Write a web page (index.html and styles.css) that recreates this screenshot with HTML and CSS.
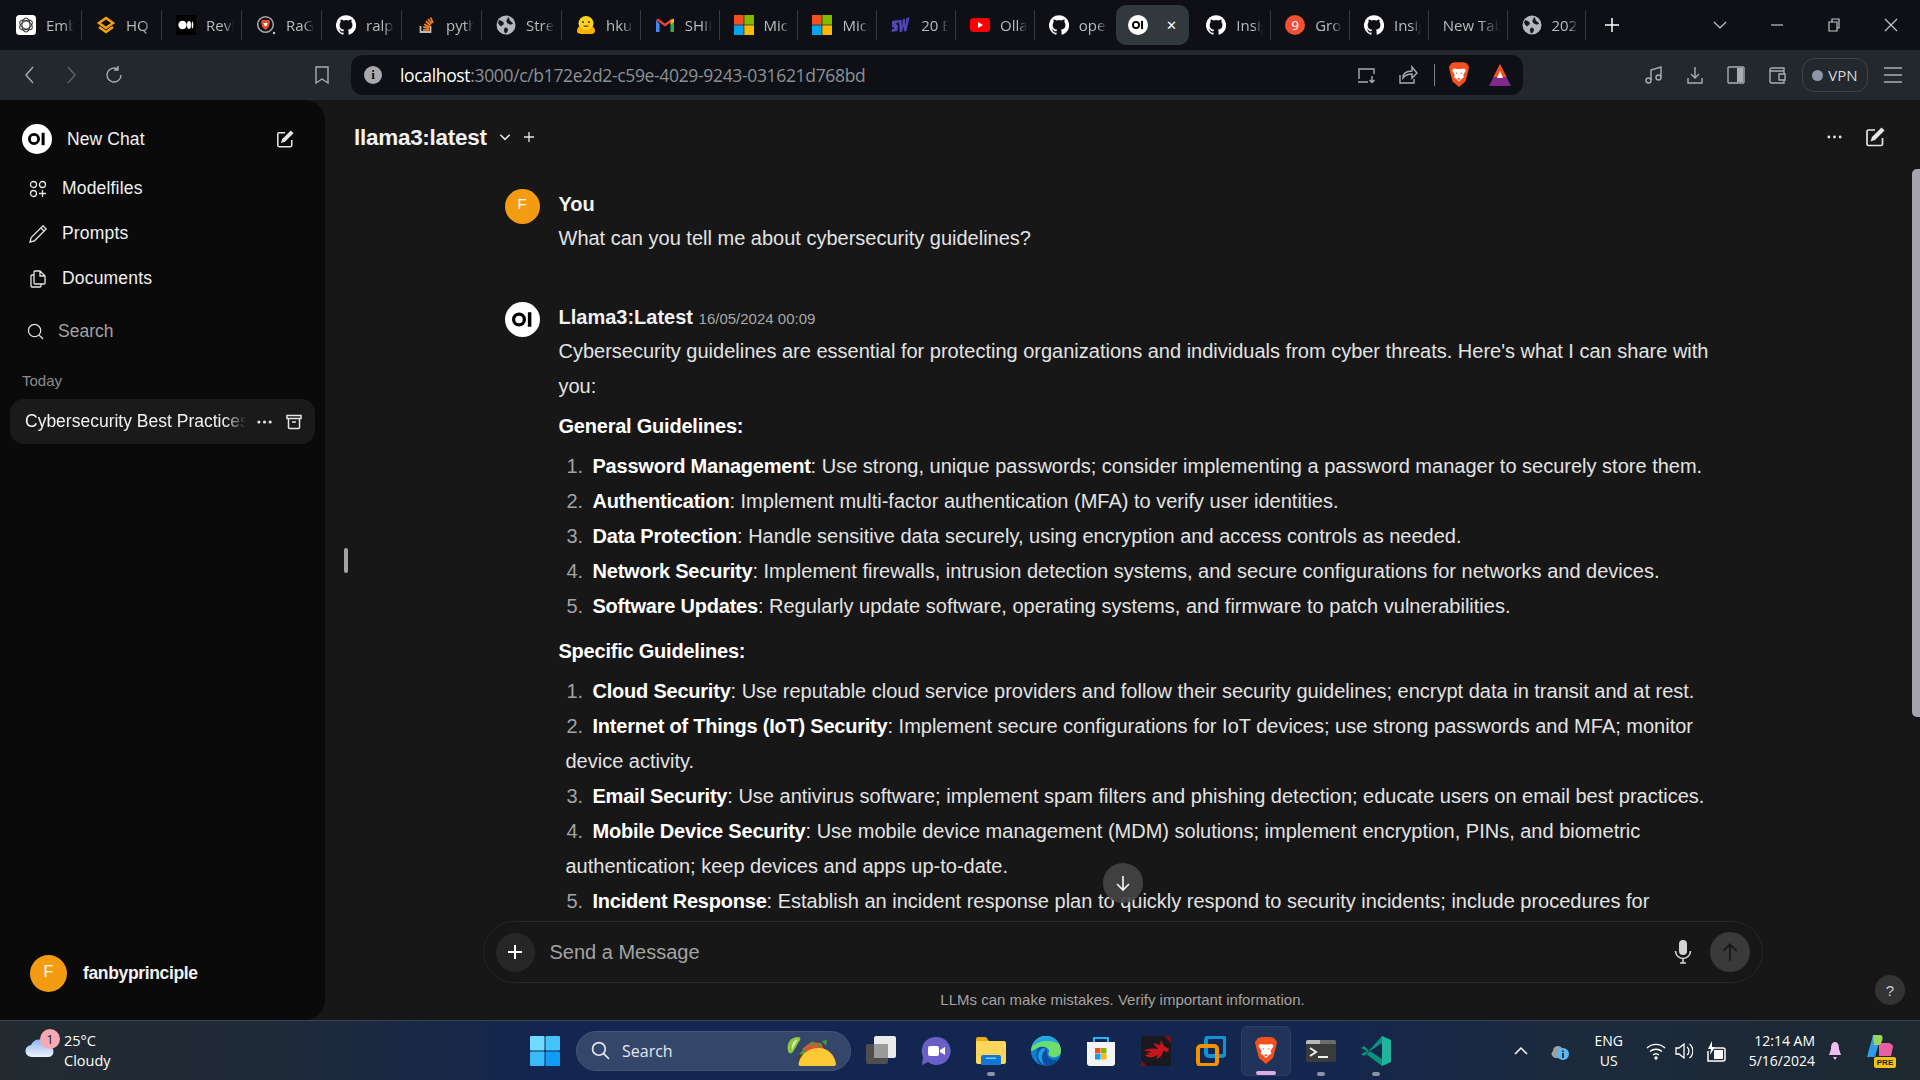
FILE: index.html
```html
<!DOCTYPE html>
<html lang="en">
<head>
<meta charset="utf-8">
<title>Open WebUI</title>
<link rel="stylesheet" href="styles.css">
</head>
<body>
<svg class="defs" aria-hidden="true">
  <symbol id="oi" viewBox="0 0 30 30"><circle cx="15" cy="15" r="15" fill="#fff"/><circle cx="12" cy="15" r="4.6" fill="none" stroke="#000" stroke-width="2.8"/><rect x="19.6" y="8.8" width="3" height="12.4" fill="#000"/></symbol>
  <symbol id="gh" viewBox="0 0 24 24"><path fill="#fff" d="M12 .3a12 12 0 0 0-3.8 23.4c.6.1.8-.3.8-.6v-2c-3.3.7-4-1.6-4-1.6-.6-1.4-1.4-1.8-1.4-1.8-1-.7.1-.7.1-.7 1.2.1 1.9 1.2 1.9 1.2 1 1.8 2.8 1.3 3.5 1 .1-.8.4-1.3.8-1.6-2.7-.3-5.5-1.3-5.5-6 0-1.2.5-2.3 1.3-3.1-.2-.4-.6-1.6 0-3.2 0 0 1-.3 3.4 1.2a11.5 11.5 0 0 1 6 0c2.3-1.5 3.3-1.2 3.3-1.2.6 1.6.2 2.8 0 3.2.9.8 1.3 1.9 1.3 3.2 0 4.6-2.8 5.6-5.5 5.9.5.4.9 1 .9 2.2v3.3c0 .3.1.7.8.6A12 12 0 0 0 12 .3"/></symbol>
  <symbol id="globe" viewBox="0 0 20 20"><circle cx="10" cy="10" r="9.500" fill="#b4b7bb"/><path fill="#17191e" d="M3 5c2 .5 3.500 1 4.500 2.500S7 10 5.500 11 3 9 2 8zM12 2c2 1 1 3.500 3 4.500s1.500 2 2 2-1.500 1.500-3 1-3-1-3.500-3S12 4 12 2zM9 12.500c2 0 3 1 3 2.500s-1.500 3-3 3.500c-.5-2-1.500-3-1-4z"/></symbol>
  <symbol id="chatgpt" viewBox="0 0 20 20"><rect width="20" height="20" rx="3.500" fill="#fff"/><g fill="none" stroke="#444" stroke-width="1.100"><ellipse cx="10" cy="10" rx="4" ry="7"/><ellipse cx="10" cy="10" rx="4" ry="7" transform="rotate(60 10 10)"/><ellipse cx="10" cy="10" rx="4" ry="7" transform="rotate(120 10 10)"/></g></symbol>
  <symbol id="hq" viewBox="0 0 20 20"><g fill="none" stroke="#f5a20c" stroke-width="2.500"><path d="M10 3l7 5-7 5-7-5z"/><path d="M3 12l7 5 7-5"/></g></symbol>
  <symbol id="medium" viewBox="0 0 20 20"><rect width="20" height="20" fill="#000"/><ellipse cx="6.500" cy="10" rx="4.200" ry="4.200" fill="#fff"/><ellipse cx="13" cy="10" rx="2" ry="4" fill="#fff"/><ellipse cx="16.500" cy="10" rx=".8" ry="3.600" fill="#fff"/></symbol>
  <symbol id="bravering" viewBox="0 0 20 20"><circle cx="9.500" cy="9.500" r="7.800" fill="none" stroke="#aaa" stroke-width="1.500"/><path fill="#e8502b" d="M6 5h7l1 2-1.200 5L9.500 15 6.200 12 5 7z"/><path fill="#fff" d="M7.500 8h4L10.500 11h-2z"/><circle cx="18" cy="18" r="1.200" fill="#ccc"/></symbol>
  <symbol id="so" viewBox="0 0 20 20"><path fill="none" stroke="#bcbbbb" stroke-width="1.800" d="M4.500 11v6h10v-6"/><g stroke="#f48024" stroke-width="1.800"><path d="M7 14.800h6M7.200 12l6 1M8.100 9.200l5.500 2.600M9.800 6.300l4.800 3.900M12 4l3.600 4.800M14.700 2.500l2.200 5.500"/></g></symbol>
  <symbol id="hf" viewBox="0 0 20 20"><circle cx="10" cy="8.500" r="7.500" fill="#ffd21e"/><path fill="#ffb000" d="M1 16c0-3 2-5 3-4l2 3 8 0 2-3c1-1 3 1 3 4s-4 3-5 3H6c-1 0-5 0-5-3z"/><circle cx="7" cy="7" r="1" fill="#333"/><circle cx="13" cy="7" r="1" fill="#333"/><path d="M7 10.500c1.500 2 4.500 2 6 0z" fill="#8a3a20"/></symbol>
  <symbol id="gmail" viewBox="0 0 20 20"><path fill="#4285f4" d="M1 5v12h3.500V9z"/><path fill="#34a853" d="M15.500 9v8H19V5z"/><path fill="#ea4335" d="M1 5l9 6.500L19 5l-2-1.500-7 5-7-5z"/><path fill="#fbbc04" d="M15.500 5.500L19 3.500V7l-3.500 2.500z"/></symbol>
  <symbol id="ms" viewBox="0 0 20 20"><rect width="9.700" height="9.700" fill="#f25022"/><rect x="10.300" width="9.700" height="9.700" fill="#7fba00"/><rect y="10.300" width="9.700" height="9.700" fill="#00a4ef"/><rect x="10.300" y="10.300" width="9.700" height="9.700" fill="#ffb900"/></symbol>
  <symbol id="sw" viewBox="0 0 20 20"><path fill="#5046b8" d="M1 6l7-1-.5 3-3 .5 2.500 2-.5 5.500-6 1 .5-3 2.500-.3-2.500-2.200zM8 5l2.500-.5.5 7 1-7.500 2-.3 .5 7 1-7.700L18.500 2l-3 14-2.500.5-.8-6-1 6.300-2.500.5z"/></symbol>
  <symbol id="yt" viewBox="0 0 20 20"><rect y="3" width="20" height="14" rx="3.500" fill="#f00"/><path d="M8 7l5 3-5 3z" fill="#fff"/></symbol>
  <symbol id="brave" viewBox="0 0 24 28"><path fill="#f4511e" d="M4 1l4-1h8l4 1 3 4-1 5-3 11-7 6-7-6L2 10 1 5z"/><path fill="#fff" d="M6 7l4 .5h4L18 7l1.500 2-3 5 1 2.500-2.500 1.500-3 3-3-3-2.500-1.500 1-2.500-3-5z"/><path fill="#f4511e" d="M8.500 11l2 1-1.500.8zM15.500 11l-2 1 1.500.8zM10 18l2-.8 2 .8-2 1.500z"/></symbol>
  <symbol id="files" viewBox="0 0 30 30"><path fill="#e8a91d" d="M0 3a2 2 0 0 1 2-2h8l3 4H0z"/><path fill="#ffd65c" d="M0 5h28a2 2 0 0 1 2 2v19a2 2 0 0 1-2 2H2a2 2 0 0 1-2-2z"/><path fill="#0f78d4" d="M5 21a2 2 0 0 1 2-2h16a2 2 0 0 1 2 2v8H5z"/><rect x="10" y="21.500" width="10" height="1.500" fill="#7fc4f5"/></symbol>
  <symbol id="edge" viewBox="0 0 30 30"><circle cx="15" cy="15" r="15" fill="#0f7fd1"/><path fill="#6fdc6b" d="M15 0a15 15 0 0 1 15 15c0 5-5 7-9 6s-4-3-3-5-2-6-8-5S1 16 0 15A15 15 0 0 1 15 0z"/><path fill="#1ea7e8" d="M15 0a15 15 0 0 1 13 8C22 4 8 3 1 11A15 15 0 0 1 15 0z"/><path fill="#0b4f9e" d="M7 12c5-3 10 0 9 5 0 5 6 9 11 6a15 15 0 0 1-12 7C8 30 3 22 7 12z"/><path fill="#1e9ce8" d="M14 12c-4 0-7 3-7 8 0 4 4 8 7 9-3-3-4-9-2-12 1-2 3-3 2-5z"/></symbol>
  <symbol id="store" viewBox="0 0 30 30"><path fill="none" stroke="#29b4f0" stroke-width="2.200" d="M8 8V2h14v6"/><path fill="#f4f4f4" d="M1 6h28v21a3 3 0 0 1-3 3H4a3 3 0 0 1-3-3z"/><g transform="translate(9 12)"><rect width="5.500" height="5.500" fill="#f25022"/><rect x="6" width="5.500" height="5.500" fill="#7fba00"/><rect y="6" width="5.500" height="5.500" fill="#00a4ef"/><rect x="6" y="6" width="5.500" height="5.500" fill="#ffb900"/></g></symbol>
  <symbol id="msi" viewBox="0 0 30 30"><rect width="30" height="30" rx="3" fill="#1a1a1e"/><path fill="#7a0f18" d="M23 0h7v7zM0 24l6 6H0z"/><path fill="#c5161d" d="M2 15c5-3 11-3 15-2L12 7l7 2 1-5 3 6 5 3 -1 3-5-1c0 4-3 7-7 8l2-4-5 2c-3 1-6 0-8-2l5-1-4-1 6-1-4-1z"/></symbol>
  <symbol id="vbox" viewBox="0 0 30 30"><rect x="10" y="1" width="19" height="19" rx="3" fill="none" stroke="#0f93d6" stroke-width="4"/><rect x="2" y="10" width="19" height="19" rx="3" fill="none" stroke="#f39200" stroke-width="4"/></symbol>
  <symbol id="term" viewBox="0 0 30 22"><rect width="30" height="22" rx="2" fill="#3b3b3b"/><path d="M2 0h12v4H0V2a2 2 0 0 1 2-2z" fill="#b9b9b9"/><path d="M14 0h14a2 2 0 0 1 2 2v2H14z" fill="#6d6d6d"/><path d="M4 8l6 4-6 4" fill="none" stroke="#eee" stroke-width="2"/><rect x="12" y="16" width="10" height="2" fill="#eee"/></symbol>
  <symbol id="vs" viewBox="0 0 30 30"><path fill="#1fb6a0" d="M21 0l9 4v22l-9 4z"/><path fill="#0d8f7f" d="M21 0v7L9 15 3 10 0 12l6 3-6 3 3 2 6-5 12 8v7L5 18z"/></symbol>
  <symbol id="msft-win" viewBox="0 0 30 30"><rect width="14.500" height="14.500" rx="1" fill="#6fdcff"/><rect x="15.500" width="14.500" height="14.500" rx="1" fill="#45c3fb"/><rect y="15.500" width="14.500" height="14.500" rx="1" fill="#3bbcfa"/><rect x="15.500" y="15.500" width="14.500" height="14.500" rx="1" fill="#0f9cf6"/></symbol>
  <symbol id="copilot" viewBox="0 0 28 30"><path fill="#2f9be8" d="M7 1h8L9 23H1z"/><path fill="#e85fa4" d="M13 9h8c4 0 6 2 6 4l-2 9H13z"/><path fill="#9ad45a" d="M7 1h7c3 0 3 3 2 6l-2 4H8z"/></symbol>
</svg>

<div class="screen">
  <header class="tabbar">
    <div class="tabs">
      <div class="tab tab-wide"><svg class="fav"><use href="#chatgpt"/></svg><span class="tab-label">Embedding</span></div>
      <div class="tab tab-wide"><svg class="fav"><use href="#hq"/></svg><span class="tab-label">HQ Stack</span></div>
      <div class="tab tab-wide"><svg class="fav"><use href="#medium"/></svg><span class="tab-label">Review</span></div>
      <div class="tab tab-wide"><svg class="fav"><use href="#bravering"/></svg><span class="tab-label">RaG chat</span></div>
      <div class="tab tab-wide"><svg class="fav"><use href="#gh"/></svg><span class="tab-label">ralph</span></div>
      <div class="tab tab-wide"><svg class="fav"><use href="#so"/></svg><span class="tab-label">python</span></div>
      <div class="tab tab-wide"><svg class="fav"><use href="#globe"/></svg><span class="tab-label">Streamlit</span></div>
      <div class="tab"><svg class="fav"><use href="#hf"/></svg><span class="tab-label">hkunlp</span></div>
      <div class="tab"><svg class="fav"><use href="#gmail"/></svg><span class="tab-label">SHIFT</span></div>
      <div class="tab"><svg class="fav"><use href="#ms"/></svg><span class="tab-label">Microsoft</span></div>
      <div class="tab"><svg class="fav"><use href="#ms"/></svg><span class="tab-label">Microsoft</span></div>
      <div class="tab"><svg class="fav"><use href="#sw"/></svg><span class="tab-label">20 Best</span></div>
      <div class="tab"><svg class="fav"><use href="#yt"/></svg><span class="tab-label">Ollama</span></div>
      <div class="tab tab-gap"><svg class="fav"><use href="#gh"/></svg><span class="tab-label">open-webui</span></div>
      <div class="tab tab-active"><svg class="fav"><use href="#oi"/></svg><span class="tab-close">✕</span></div>
      <div class="tab"><svg class="fav"><use href="#gh"/></svg><span class="tab-label">Insights</span></div>
      <div class="tab"><span class="fav fav-grok">9</span><span class="tab-label">Groq</span></div>
      <div class="tab"><svg class="fav"><use href="#gh"/></svg><span class="tab-label">Insights</span></div>
      <div class="tab"><span class="tab-label">New Tab</span></div>
      <div class="tab"><svg class="fav"><use href="#globe"/></svg><span class="tab-label">2024</span></div>
    </div>
    <svg class="new-tab" viewBox="0 0 16 16"><path d="M8 1v14M1 8h14"/></svg>
    <div class="win-ctrl">
      <svg viewBox="0 0 16 16"><path d="M2 5l6 6 6-6"/></svg>
      <svg viewBox="0 0 16 16"><path d="M2 8h12"/></svg>
      <svg viewBox="0 0 16 16"><path d="M3 5h8v9H3zM6 5V2h7v9h-2"/></svg>
      <svg viewBox="0 0 16 16"><path d="M2 2l12 12M14 2L2 14"/></svg>
    </div>
  </header>

  <nav class="toolbar">
    <div class="nav-left">
      <svg class="tb-ic" viewBox="0 0 20 20"><path d="M13 2L6 10l7 8"/></svg>
      <svg class="tb-ic dim" viewBox="0 0 20 20"><path d="M7 2l7 8-7 8"/></svg>
      <svg class="tb-ic reload" viewBox="0 0 20 20"><path d="M17 10a7 7 0 1 1-3-5.700M14 1v4h-4"/></svg>
    </div>
    <svg class="tb-ic bookmark" viewBox="0 0 20 20"><path d="M4 2h12v16l-6-4-6 4z"/></svg>
    <div class="address">
      <span class="info">i</span>
      <span class="url"><b>localhost</b>:3000/c/b172e2d2-c59e-4029-9243-031621d768bd</span>
      <svg class="tb-ic small" viewBox="0 0 20 20"><path d="M2 14V4h15v5M1 17h10M15 11v6M12.500 15l2.500 2.500 2.500-2.500"/></svg>
      <svg class="tb-ic small" viewBox="0 0 20 20"><path d="M2 10v8h14v-4M5 13c0-5 4-7 9-7V2l5 6-5 5V9c-4 0-7 1-9 4z"/></svg>
      <span class="addr-sep"></span>
      <svg class="addr-brave"><use href="#brave"/></svg>
      <svg class="addr-tri" viewBox="0 0 24 24"><path d="M12 1l11 22H1z" fill="#7d2a8c"/><path d="M12 1l6.500 13H5.500z" fill="#f4511e"/><path d="M12 8l3 7H9z" fill="#fff"/></svg>
    </div>
    <div class="nav-right">
      <svg class="tb-ic" viewBox="0 0 20 20"><path d="M7 15V5l10-3v10"/><circle cx="4.500" cy="15.500" r="2.500"/><circle cx="14.500" cy="12.500" r="2.500"/></svg>
      <svg class="tb-ic" viewBox="0 0 20 20"><path d="M10 2v11M6 9l4 4 4-4M3 13v5h14v-5"/></svg>
      <svg class="tb-ic" viewBox="0 0 20 20"><rect x="2" y="2" width="16" height="16" rx="1"/><rect class="fill-ic" x="11" y="3" width="6" height="14"/></svg>
      <svg class="tb-ic" viewBox="0 0 20 20"><path d="M17 6V3H5a2 2 0 0 0-2 2v11a2 2 0 0 0 2 2h12v-3M3 6h14v3M12 9h6v6h-6z"/></svg>
      <div class="vpn"><span class="vpn-dot"></span>VPN</div>
      <svg class="tb-ic" viewBox="0 0 20 20"><path d="M1 3h18M1 10h18M1 17h18"/></svg>
    </div>
  </nav>

  <div class="app">
    <aside class="sidebar">
      <div class="side-top">
        <svg class="logo"><use href="#oi"/></svg>
        <span class="side-new">New Chat</span>
        <svg class="ic-20 edit" viewBox="0 0 20 20"><path class="line" d="M17.500 11v6a1.500 1.500 0 0 1-1.500 1.500H3.500A1.500 1.500 0 0 1 2 17V4.500A1.500 1.500 0 0 1 3.500 3H10"/><path class="solid" d="M16.500.5l3 3-9.500 9.500-4.500 1.500 1.500-4.500z"/></svg>
      </div>
      <a class="side-item"><svg class="ic-side" viewBox="0 0 18 18"><circle cx="4.500" cy="4.500" r="3"/><circle cx="13.500" cy="4.500" r="3"/><circle cx="4.500" cy="13.500" r="3"/><path d="M13.500 10v7M10 13.500h7"/></svg>Modelfiles</a>
      <a class="side-item"><svg class="ic-side" viewBox="0 0 18 18"><path d="M14 .8l3.200 3.200L5.500 15.800 1 17l1.200-4.500z"/><path d="M12 3l3 3"/></svg>Prompts</a>
      <a class="side-item"><svg class="ic-side" viewBox="0 0 18 18"><path d="M6 1h5l5 5v7a1 1 0 0 1-1 1H6a1 1 0 0 1-1-1V2a1 1 0 0 1 1-1zM11 1v5h5"/><path d="M5 5H3a1 1 0 0 0-1 1v10a1 1 0 0 0 1 1h8a1 1 0 0 0 1-1v-2"/></svg>Documents</a>
      <div class="side-search"><svg class="ic-search" viewBox="0 0 18 18"><circle cx="8" cy="8" r="6.500"/><path d="M13 13l4 4"/></svg>Search</div>
      <div class="side-date">Today</div>
      <div class="history">
        <span class="history-title">Cybersecurity Best Practices</span>
        <svg class="dots-ic" viewBox="0 0 16 4"><circle cx="2" cy="2" r="1.700"/><circle cx="8" cy="2" r="1.700"/><circle cx="14" cy="2" r="1.700"/></svg>
        <svg class="archive" viewBox="0 0 16 16"><path d="M1 1.500h14v3H1zM2.500 4.500v9a1 1 0 0 0 1 1h9a1 1 0 0 0 1-1v-9M6 8h4"/></svg>
      </div>
      <div class="side-user"><span class="avatar avatar-user">F</span><span class="user-name">fanbyprinciple</span></div>
    </aside>

    <main class="main">
      <div class="chat-head">
        <span class="model">llama3:latest</span>
        <svg class="head-chev" viewBox="0 0 12 12"><path d="M2 4l4 4 4-4"/></svg>
        <svg class="head-plus" viewBox="0 0 12 12"><path d="M6 1v10M1 6h10"/></svg>
        <svg class="dots-ic head-dots" viewBox="0 0 16 4"><circle cx="2" cy="2" r="1.500"/><circle cx="8" cy="2" r="1.500"/><circle cx="14" cy="2" r="1.500"/></svg>
        <svg class="ic-20 head-edit" viewBox="0 0 20 20"><path class="line" d="M17.500 11v6a1.500 1.500 0 0 1-1.500 1.500H3.500A1.500 1.500 0 0 1 2 17V4.500A1.500 1.500 0 0 1 3.500 3H10"/><path class="solid" d="M16.500.5l3 3-9.500 9.500-4.500 1.500 1.500-4.500z"/></svg>
      </div>
      <div class="thread">
        <article class="msg">
          <span class="avatar avatar-msg">F</span>
          <div class="msg-body">
            <div class="msg-name">You</div>
            <p class="para">What can you tell me about cybersecurity guidelines?</p>
          </div>
        </article>
        <article class="msg">
          <svg class="avatar-msg"><use href="#oi"/></svg>
          <div class="msg-body">
            <div class="msg-name">Llama3:Latest <span class="msg-time">16/05/2024 00:09</span></div>
            <p class="para">Cybersecurity guidelines are essential for protecting organizations and individuals from cyber threats. Here's what I can share with you:</p>
            <p class="para"><strong>General Guidelines:</strong></p>
            <ol class="list">
              <li><span class="num">1.</span><strong>Password Management</strong>: Use strong, unique passwords; consider implementing a password manager to securely store them.</li>
              <li><span class="num">2.</span><strong>Authentication</strong>: Implement multi-factor authentication (MFA) to verify user identities.</li>
              <li><span class="num">3.</span><strong>Data Protection</strong>: Handle sensitive data securely, using encryption and access controls as needed.</li>
              <li><span class="num">4.</span><strong>Network Security</strong>: Implement firewalls, intrusion detection systems, and secure configurations for networks and devices.</li>
              <li><span class="num">5.</span><strong>Software Updates</strong>: Regularly update software, operating systems, and firmware to patch vulnerabilities.</li>
            </ol>
            <p class="para"><strong>Specific Guidelines:</strong></p>
            <ol class="list">
              <li><span class="num">1.</span><strong>Cloud Security</strong>: Use reputable cloud service providers and follow their security guidelines; encrypt data in transit and at rest.</li>
              <li><span class="num">2.</span><strong>Internet of Things (IoT) Security</strong>: Implement secure configurations for IoT devices; use strong passwords and MFA; monitor device activity.</li>
              <li><span class="num">3.</span><strong>Email Security</strong>: Use antivirus software; implement spam filters and phishing detection; educate users on email best practices.</li>
              <li><span class="num">4.</span><strong>Mobile Device Security</strong>: Use mobile device management (MDM) solutions; implement encryption, PINs, and biometric authentication; keep devices and apps up-to-date.</li>
              <li><span class="num">5.</span><strong>Incident Response</strong>: Establish an incident response plan to quickly respond to security incidents; include procedures for</li>
            </ol>
          </div>
        </article>
      </div>

      <div class="resize-handle"></div>
      <div class="scrollbar"></div>
      <button class="to-bottom"><svg viewBox="0 0 20 20"><path d="M10 3v14M4 11l6 6 6-6"/></svg></button>

      <div class="composer">
        <div class="input-bar">
          <span class="add-btn"><svg viewBox="0 0 16 16"><path d="M8 1v14M1 8h14"/></svg></span>
          <span class="placeholder">Send a Message</span>
          <svg class="mic" viewBox="0 0 18 24"><rect x="5" y="0" width="8" height="15" rx="4" fill="#d4d4d4"/><path d="M1.500 11a7.500 7.500 0 0 0 15 0M9 18.500V23M6 23h6" fill="none" stroke="#d4d4d4" stroke-width="1.600"/></svg>
          <span class="send-btn"><svg viewBox="0 0 20 20"><path d="M10 18V3M4 9l6-6 6 6"/></svg></span>
        </div>
        <div class="disclaimer">LLMs can make mistakes. Verify important information.</div>
      </div>
      <div class="help">?</div>
    </main>
  </div>

  <footer class="taskbar">
    <div class="weather">
      <div class="weather-ic">
        <svg viewBox="0 0 30 22"><defs><linearGradient id="cloud" x1="0" y1="0" x2="0" y2="1"><stop offset="0" stop-color="#8fb4ee"/><stop offset="1" stop-color="#eef4ff"/></linearGradient></defs><path fill="url(#cloud)" d="M7 20a6 6 0 0 1-1-12 9 9 0 0 1 17 1 5.500 5.500 0 0 1 0 11z"/></svg>
        <span class="badge">1</span>
      </div>
      <div class="weather-text"><span>25°C</span><span>Cloudy</span></div>
    </div>
    <div class="task-center">
      <svg class="task-ic first"><use href="#msft-win"/></svg>
      <div class="task-search">
        <svg class="ts-ic" viewBox="0 0 18 18"><circle cx="7.500" cy="7.500" r="6"/><path d="M12 12l5 5"/></svg>
        <span>Search</span>
        <svg class="taco" viewBox="0 0 50 32"><path fill="#8cc63f" d="M2 16C0 8 5 2 12 2c2 0 3 1 2 3l-7 12c-2 2-4 2-5-1z"/><path fill="#d6eba0" d="M6 14C5 9 8 5 12 4L6 15z"/><path fill="#5c3a21" d="M12 24C14 14 22 8 32 8c8 0 8 8 4 20H18z"/><path fill="#e2513a" d="M16 14l9-7 10 1 3 6-14 5z"/><path fill="#4a9c3e" d="M13 19l6-6 2 7zM22 10l5-4 2 5zM36 6l5-1-1 6zM30 10l5-2 1 5z"/><path fill="#fcc934" d="M15 31c-2 0-3-1-2-4 2-8 10-14 20-14 9 0 16 7 17 16 0 1-1 2-2 2z"/></svg>
      </div>
      <div class="task-item"><svg class="task-ic" viewBox="0 0 30 30"><rect y="8" width="22" height="20" rx="2" fill="#4e4e50"/><rect x="8" y="0" width="22" height="22" rx="2" fill="#f4f4f4" fill-opacity=".95"/><rect x="8" y="8" width="14" height="14" fill="#9a9a9a"/></svg></div>
      <div class="task-item"><svg class="task-ic" viewBox="0 0 30 30"><path fill="#6a5fc9" d="M15 1a14 14 0 1 1-8 25l-6 3 1-8A14 14 0 0 1 15 1z"/><rect x="7" y="10" width="11" height="10" rx="2" fill="#fff"/><path fill="#fff" d="M19 14l5-3v8l-5-3z"/></svg></div>
      <div class="task-item"><svg class="task-ic"><use href="#files"/></svg><i class="dot"></i></div>
      <div class="task-item"><svg class="task-ic"><use href="#edge"/></svg></div>
      <div class="task-item"><svg class="task-ic"><use href="#store"/></svg></div>
      <div class="task-item"><svg class="task-ic"><use href="#msi"/></svg></div>
      <div class="task-item"><svg class="task-ic"><use href="#vbox"/></svg></div>
      <div class="task-item task-active"><svg class="task-brave"><use href="#brave"/></svg><i class="dot dot-on"></i></div>
      <div class="task-item"><svg class="task-ic term"><use href="#term"/></svg><i class="dot"></i></div>
      <div class="task-item"><svg class="task-ic"><use href="#vs"/></svg><i class="dot"></i></div>
    </div>
    <div class="tray">
      <svg class="tray-chev" viewBox="0 0 14 10"><path d="M1 8l6-6 6 6"/></svg>
      <svg class="tray-od" viewBox="0 0 18 22"><path fill="#9aa0a6" d="M2 11a5 5 0 0 1 9-3v10H5a4 4 0 0 1-3-7z"/><circle cx="12" cy="14" r="6" fill="#5cb7f0"/><rect x="11.200" y="13" width="1.600" height="5" fill="#123"/><rect x="11.200" y="10.500" width="1.600" height="1.600" fill="#123"/></svg>
      <div class="tray-lang"><span>ENG</span><span>US</span></div>
      <svg class="tray-wifi" viewBox="0 0 20 18"><path d="M1 6a13 13 0 0 1 18 0M4 9.500a9 9 0 0 1 12 0M7 13a4.500 4.500 0 0 1 6 0"/><circle cx="10" cy="16" r="1"/></svg>
      <svg class="tray-vol" viewBox="0 0 18 20"><path d="M1 7v6h3l5 4V3L4 7zM12 6a5 5 0 0 1 0 8M14.500 3a9 9 0 0 1 0 14"/></svg>
      <svg class="tray-bat" viewBox="0 0 22 22"><path d="M5 8h13a2 2 0 0 1 2 2v9a2 2 0 0 1-2 2H3V11" fill="none" stroke="#fff" stroke-width="1.500"/><rect x="9" y="10" width="9" height="9" fill="#fff"/><path d="M7 1L3 9h3l-1 6 5-8H7z" fill="#fff"/></svg>
      <div class="tray-clock"><span>12:14 AM</span><span>5/16/2024</span></div>
      <svg class="tray-bell" viewBox="0 0 12 20"><path d="M6 1c3 0 4 3 4 7l2 6H0l2-6c0-4 1-7 4-7z" fill="#f0bdf0"/><path d="M4 16h4l-2 3z" fill="#f0bdf0"/></svg>
      <div class="tray-copilot"><svg viewBox="0 0 28 30"><use href="#copilot"/></svg><span class="pre">PRE</span></div>
    </div>
  </footer>
</div>
</body>
</html>
```

FILE: styles.css
```css
* { box-sizing: border-box; }
html, body { margin: 0; height: 100%; }
body { background: #171717; font-family: "Liberation Sans", Arial, sans-serif; color: #e5e5e5; overflow: hidden; }
.defs { position: absolute; width: 0; height: 0; }
.screen { display: flex; flex-direction: column; height: 1080px; }

/* tab strip */
.tabbar { height: 50px; background: #0e1015; display: flex; align-items: center; padding-left: 2px; flex: none; }
.tabs { display: flex; align-items: center; width: 1586px; height: 40px; flex: none; }
.tab { flex: none; width: 78.800px; height: 30px; display: flex; align-items: center; gap: 10px; padding: 0 7px 0 14px; border-right: 1px solid #36393e; font: 15px "Open Sans", sans-serif; color: #b9bbbe; }
.tab-wide { width: 80px; }
.tab-gap { border-right: 0; }
.tab-label { flex: 1; min-width: 0; overflow: hidden; white-space: nowrap; -webkit-mask-image: linear-gradient(90deg, #000 65%, transparent 100%); mask-image: linear-gradient(90deg, #000 65%, transparent 100%); }
.fav { width: 20px; height: 20px; flex: none; }
.fav-grok { border-radius: 50%; background: #f05033; color: #fff; font: 13px "Open Sans", sans-serif; display: flex; align-items: center; justify-content: center; }
.tab-active { height: 40px; width: 73px; margin: 0 3.400px 0 2.400px; background: #32393d; border: 0; border-radius: 10px; padding: 0 12px; justify-content: space-between; color: #fff; }
.tab-close { font-size: 13px; }
.new-tab { width: 16px; height: 16px; margin-left: 16px; flex: none; }
.new-tab path { stroke: #fff; stroke-width: 1.500; fill: none; }
.win-ctrl { display: flex; margin-left: auto; align-items: center; gap: 41px; padding-right: 21px; }
.win-ctrl svg { width: 16px; height: 16px; fill: none; stroke: #c4c6c9; stroke-width: 1.200; }

/* toolbar */
.toolbar { height: 50px; background: #23282c; display: flex; align-items: center; flex: none; }
.tb-ic { width: 20px; height: 20px; fill: none; stroke: #a9adb1; stroke-width: 1.400; flex: none; }
.tb-ic.dim { stroke: #5f6469; }
.reload { margin-left: 2px; }
.nav-left { display: flex; gap: 21px; padding-left: 20px; width: 312px; }
.bookmark { margin-right: 19px; }
.address { width: 1172px; height: 40px; border-radius: 12px; background: #0e1015; display: flex; align-items: center; padding: 0 11px 0 13px; font: 17.500px "Open Sans", sans-serif; }
.info { width: 18px; height: 18px; border-radius: 50%; background: #a7a9ac; color: #0e1015; font: bold 13px "Liberation Serif", serif; display: flex; align-items: center; justify-content: center; flex: none; }
.url { margin-left: 18px; flex: 1; color: #8b9096; letter-spacing: -.34px; }
.url b { font-weight: 400; color: #fff; }
.small { margin-right: 21px; }
.small + .small { margin-right: 16px; }
.addr-sep { width: 1px; height: 22px; background: #7d8287; margin-right: 13px; }
.addr-brave { width: 22px; height: 26px; margin-right: 18px; flex: none; }
.addr-tri { width: 24px; height: 24px; flex: none; }
.nav-right { display: flex; align-items: center; gap: 21px; padding-left: 121px; }
.vpn { width: 66px; height: 34px; border: 1px solid #3e4448; border-radius: 12px; display: flex; align-items: center; justify-content: center; gap: 5px; font: 15px "Open Sans", sans-serif; color: #d5d7d9; margin-left: -6px; margin-right: -6px; }
.vpn-dot { width: 11px; height: 11px; border-radius: 50%; background: #8d97a8; }
.fill-ic { fill: #a9adb1; stroke: none; }

/* app */
.app { flex: 1; display: flex; min-height: 0; background: #171717; }
.sidebar { width: 325px; flex: none; background: #0a0a0a; border-radius: 0 20px 20px 0; display: flex; flex-direction: column; }
.side-top { display: flex; align-items: center; padding: 24px 0 0 22px; }
.logo { width: 30px; height: 30px; flex: none; }
.side-new { margin-left: 15px; font-size: 17.500px; letter-spacing: .1px; color: #f1f1f1; flex: 1; }
.ic-20 { width: 20px; height: 20px; flex: none; }
.line { fill: none; stroke: #e5e5e5; stroke-width: 1.700; }
.solid { fill: #e5e5e5; }
.edit { margin-right: 31px; width: 18px; height: 18px; }
.side-item { height: 45px; display: flex; align-items: center; gap: 15px; padding-left: 29px; font-size: 17.500px; letter-spacing: .18px; color: #f1f1f1; }
.side-top + .side-item { margin-top: 12px; }
.ic-side { width: 18px; height: 18px; fill: none; stroke: #e5e5e5; stroke-width: 1.300; flex: none; }
.side-search { height: 45px; margin-top: 8px; display: flex; align-items: center; gap: 14px; padding-left: 27px; font-size: 17.500px; color: #a3a3a3; }
.ic-search { width: 17px; height: 17px; fill: none; stroke: #e5e5e5; stroke-width: 1.300; flex: none; }
.side-date { height: 20px; margin-top: 17px; padding-left: 22px; font-size: 15px; line-height: 20px; color: #8a8a8a; }
.history { height: 45px; margin: 8px 10px 0; background: #1a1a1a; border-radius: 14px; display: flex; align-items: center; padding-left: 15px; }
.history-title { width: 221px; flex: none; white-space: nowrap; overflow: hidden; font-size: 17.500px; color: #f1f1f1; -webkit-mask-image: linear-gradient(90deg, #000 90%, transparent); mask-image: linear-gradient(90deg, #000 90%, transparent); }
.dots-ic { width: 15px; height: 4px; fill: #e5e5e5; flex: none; }
.history .dots-ic { margin-left: 11px; }
.archive { width: 16px; height: 16px; margin-left: 14px; fill: none; stroke: #e5e5e5; stroke-width: 1.500; flex: none; }
.side-user { margin-top: auto; padding: 0 0 28px 30px; display: flex; align-items: center; gap: 16px; }
.avatar { display: flex; align-items: center; justify-content: center; border-radius: 50%; background: #f39c12; color: #fff; font-weight: 400; flex: none; }
.avatar-user { width: 37px; height: 37px; font-size: 16px; padding-bottom: 4px; }
.user-name { font-size: 17.500px; font-weight: 700; letter-spacing: -.35px; color: #f1f1f1; }

/* chat */
.main { flex: 1; min-width: 0; position: relative; display: flex; flex-direction: column; overflow: hidden; }
.chat-head { height: 74px; flex: none; display: flex; align-items: center; padding: 0 35px 0 29px; }
.model { font-size: 22.500px; color: #f1f1f1; font-weight: 700; letter-spacing: -.28px; margin-top: 2px; }
.head-chev { width: 14px; height: 14px; margin-left: 11px; fill: none; stroke: #e5e5e5; stroke-width: 1.300; }
.head-plus { width: 12px; height: 12px; margin-left: 11px; fill: none; stroke: #e5e5e5; stroke-width: 1.300; }
.head-dots { margin-left: auto; }
.head-edit { margin-left: 23px; }
.thread { width: 1236px; margin: 0 auto; padding-top: 15px; display: flex; flex-direction: column; gap: 41px; }
.msg { display: flex; gap: 19px; font-size: 20px; line-height: 35px; }
.avatar-msg { width: 35px; height: 35px; font-size: 15px; padding-bottom: 7px; flex: none; }
svg.avatar-msg { padding: 0; }
.msg-body { min-width: 0; flex: 1; }
.msg-name { height: 31px; line-height: 31px; font-weight: 700; color: #f1f1f1; margin-bottom: 1px; }
.msg-time { font-size: 15px; font-weight: 400; color: #a8a8a8; }
.para { margin: 0 0 5px; color: #e3e3e3; }
strong { font-weight: 700; color: #fff; letter-spacing: -.22px; }
.list { list-style: none; margin: 0 0 10px; padding: 0 0 0 7px; color: #e3e3e3; }
.num { display: inline-block; width: 27px; color: #a3a3a3; padding-left: 1px; }

.resize-handle { position: absolute; left: 19px; top: 448px; width: 4px; height: 25px; border-radius: 2px; background: #a3a3a3; }
.scrollbar { position: absolute; right: 0; top: 69px; width: 8px; height: 548px; border-radius: 5px 0 0 5px; background: #a5a5ae; }
.to-bottom { position: absolute; left: 778px; top: 763px; width: 40px; height: 40px; border: 0; border-radius: 50%; background: rgba(68,68,68,.92); padding: 10px; display: flex; }
.to-bottom svg { width: 20px; height: 20px; fill: none; stroke: #f1f1f1; stroke-width: 1.700; }
.composer { position: absolute; left: 0; right: 0; top: 821px; display: flex; flex-direction: column; align-items: center; background: linear-gradient(180deg, transparent, #171717 8px); }
.input-bar { width: 1280px; height: 62px; border: 1px solid #262626; border-radius: 31px; background: #171717; display: flex; align-items: center; padding: 0 12px; }
.add-btn { width: 39px; height: 39px; border-radius: 50%; background: #262626; display: flex; align-items: center; justify-content: center; flex: none; }
.add-btn svg { width: 16px; height: 16px; fill: none; stroke: #fff; stroke-width: 2; }
.placeholder { margin-left: 15px; flex: 1; font-size: 20px; color: #a3a3a3; }
.mic { width: 18px; height: 24px; margin-right: 18px; flex: none; }
.send-btn { width: 40px; height: 40px; border-radius: 50%; background: #3a3a3a; display: flex; align-items: center; justify-content: center; flex: none; }
.send-btn svg { width: 22px; height: 22px; fill: none; stroke: #171717; stroke-width: 1.600; }
.disclaimer { margin-top: 8px; font-size: 15px; line-height: 18px; color: #a3a3a3; }
.help { position: absolute; right: 15px; top: 875px; width: 30px; height: 30px; border-radius: 50%; background: #333; color: #d0d0d0; font-size: 15px; display: flex; align-items: center; justify-content: center; }

/* taskbar */
.taskbar { height: 60px; flex: none; display: flex; align-items: center; border-top: 1px solid #3b4551; background: linear-gradient(90deg, #232b31 0, #1f2a38 14%, #13264f 28%, #13264f 68%, #1c2a3c 82%, #1d2830 100%); color: #fff; font: 14px "Open Sans", sans-serif; position: relative; }
.weather { display: flex; align-items: center; width: 530px; padding-left: 25px; flex: none; }
.weather-ic { width: 39px; height: 40px; position: relative; flex: none; }
.weather-ic svg { width: 30px; height: 22px; position: absolute; left: 0; top: 6px; }
.badge { position: absolute; left: 15px; top: -2px; width: 20px; height: 20px; border-radius: 50%; background: #f7a8b2; color: #1b1b1b; font-size: 13px; display: flex; align-items: center; justify-content: center; }
.weather-text { display: flex; flex-direction: column; line-height: 20px; font-size: 14.500px; }
.task-center { display: flex; align-items: center; }
.task-ic { width: 30px; height: 30px; flex: none; }
.first { margin-right: 16px; }
.task-search { width: 275px; height: 40px; border-radius: 20px; background: #35466b; border: 1px solid #43557a; display: flex; align-items: center; padding: 0 14px 0 14px; font-size: 16px; color: #e4e7ee; margin-right: 2px; }
.ts-ic { width: 19px; height: 19px; fill: none; stroke: #e4e7ee; stroke-width: 1.600; flex: none; margin-right: 12px; }
.taco { width: 50px; height: 32px; margin-left: auto; flex: none; }
.task-item { width: 55px; height: 50px; display: flex; align-items: center; justify-content: center; position: relative; }
.task-active { background: #1f3458; border: 1px solid #2b3f63; border-radius: 6px; margin-left: 3px; margin-right: 2px; width: 50px; }
.task-brave { width: 24px; height: 28px; }
.term { height: 22px; }
.dot { position: absolute; left: 50%; bottom: 0; width: 8px; height: 4px; margin-left: -4px; border-radius: 2px; background: #8b93a5; }
.dot-on { width: 20px; margin-left: -10px; background: #dfa8e6; }
.tray { display: flex; align-items: center; margin-left: auto; padding-right: 26px; }
.tray-chev { width: 14px; height: 10px; fill: none; stroke: #fff; stroke-width: 1.500; margin-right: 23px; }
.tray-od { width: 18px; height: 22px; margin-right: 26px; }
.tray-lang { display: flex; flex-direction: column; align-items: center; line-height: 20px; margin-right: 23px; }
.tray-wifi { width: 20px; height: 18px; fill: none; stroke: #fff; stroke-width: 1.400; margin-right: 9px; }
.tray-vol { width: 18px; height: 20px; fill: none; stroke: #fff; stroke-width: 1.300; margin-right: 12px; }
.tray-bat { width: 22px; height: 22px; }
.tray-clock { display: flex; flex-direction: column; align-items: flex-end; line-height: 20px; width: 88px; margin-right: 14px; }
.tray-bell { width: 12px; height: 20px; margin-right: 25px; }
.tray-copilot { width: 28px; height: 34px; position: relative; }
.tray-copilot svg { width: 28px; height: 30px; display: block; }
.pre { position: absolute; right: -2px; bottom: 0; width: 22px; height: 11px; border-radius: 2px; background: #f3c11e; color: #1b1b1b; font: bold 8px/11px "Liberation Sans", sans-serif; text-align: center; }
```
